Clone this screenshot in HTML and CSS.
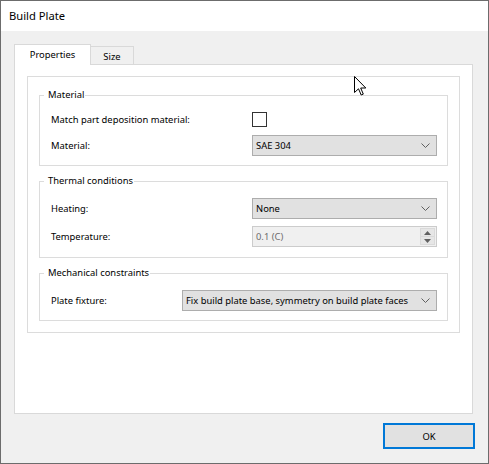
FILE: index.html
```html
<!DOCTYPE html>
<html>
<head>
<meta charset="utf-8">
<title>Build Plate</title>
<link rel="stylesheet" href="styles.css">
</head>
<body>
<div class="window">
  <div class="titlebar">Build Plate</div>
  <div class="client">
    <div class="tabs">
      <div class="tab active">Properties</div>
      <div class="tab">Size</div>
    </div>
    <div class="panel">
      <div class="inner">
        <fieldset class="group">
          <legend>Material</legend>
          <div class="row row-check">
            <span class="label">Match part deposition material:</span>
            <span class="checkbox"></span>
          </div>
          <div class="row row-gap8">
            <span class="label">Material:</span>
            <div class="combo"><span class="combo-text">SAE 304</span><svg class="chev" width="9" height="5" viewBox="0 0 9 5"><path d="M0.5 0.5 L4.5 4.5 L8.5 0.5" fill="none" stroke="#606060" stroke-width="1"/></svg></div>
          </div>
        </fieldset>
        <fieldset class="group">
          <legend>Thermal conditions</legend>
          <div class="row">
            <span class="label">Heating:</span>
            <div class="combo"><span class="combo-text">None</span><svg class="chev" width="9" height="5" viewBox="0 0 9 5"><path d="M0.5 0.5 L4.5 4.5 L8.5 0.5" fill="none" stroke="#606060" stroke-width="1"/></svg></div>
          </div>
          <div class="row row-gap7">
            <span class="label">Temperature:</span>
            <div class="spinfield">
              <span class="spin-text">0.1 (C)</span>
              <div class="spin">
                <div class="spin-btn"><svg width="7" height="4" viewBox="0 0 7 4"><path d="M0 4 L3.5 0 L7 4 Z" fill="#606060"/></svg></div>
                <div class="spin-btn"><svg width="7" height="4" viewBox="0 0 7 4"><path d="M0 0 L3.5 4 L7 0 Z" fill="#606060"/></svg></div>
              </div>
            </div>
          </div>
        </fieldset>
        <fieldset class="group">
          <legend>Mechanical constraints</legend>
          <div class="row">
            <span class="label label-short">Plate fixture:</span>
            <div class="combo"><span class="combo-text">Fix build plate base, symmetry on build plate faces</span><svg class="chev" width="9" height="5" viewBox="0 0 9 5"><path d="M0.5 0.5 L4.5 4.5 L8.5 0.5" fill="none" stroke="#606060" stroke-width="1"/></svg></div>
          </div>
        </fieldset>
      </div>
    </div>
    <div class="buttons">
      <button class="ok">OK</button>
    </div>
  </div>
  <svg class="cursor" width="13" height="20" viewBox="0 0 13 20"><path d="M0.5 0.5 L0.5 16.5 L4.5 12.8 L7.2 19 L9.3 18.1 L6.7 12 L11.8 12 Z" fill="#ffffff" stroke="#000000" stroke-width="1" stroke-linejoin="miter"/></svg>
</div>
</body>
</html>
```

FILE: styles.css
```css
* {
  box-sizing: border-box;
}

html, body {
  margin: 0;
  padding: 0;
  background: #2b2b2b;
}

body {
  font-family: "Noto Sans", "Open Sans", sans-serif;
  font-size: 9.4px;
  color: #000000;
}

.window {
  position: relative;
  width: 489px;
  height: 464px;
  border: 1px solid #6c6c6c;
  background: #f0f0f0;
  display: flex;
  flex-direction: column;
  overflow: hidden;
}

.titlebar {
  height: 30px;
  line-height: 30px;
  background: #ffffff;
  padding-left: 8px;
  font-size: 11.2px;
  color: #000000;
}

.client {
  flex: 1;
  padding: 13px 13px 0 13px;
  display: flex;
  flex-direction: column;
}

.tabs {
  height: 20px;
  display: flex;
  align-items: flex-end;
}

.tab {
  height: 18px;
  width: 44px;
  border: 1px solid #d9d9d9;
  border-bottom: none;
  background: #f0f0f0;
  display: flex;
  align-items: center;
  justify-content: center;
  padding-top: 1px;
}

.tab.active {
  width: 77px;
  height: 21px;
  margin-bottom: -1px;
  background: #ffffff;
  position: relative;
  z-index: 1;
  margin-right: -1px;
  padding-top: 0;
  padding-bottom: 2px;
}

.panel {
  height: 350px;
  margin-right: 2px;
  background: #ffffff;
  border: 1px solid #d9d9d9;
  padding: 11px 12px 0 12px;
}

.inner {
  border: 1px solid #dcdcdc;
  padding: 10px 11px 11px 11px;
}

.group {
  margin: 0;
  min-width: 0;
  border: 1px solid #dcdcdc;
  padding: 9px 10px 9px 11px;
}

.group + .group {
  margin-top: 7px;
}

.group:nth-child(2) {
  padding-bottom: 10px;
}

.group legend {
  line-height: 16px;
  height: 16px;
  padding: 0 1px 0 4px;
  margin-left: -7px;
}

.row {
  display: flex;
  align-items: center;
  height: 21px;
}

.row-check {
  height: 15px;
}

.row-gap8 {
  margin-top: 8px;
}

.row-gap7 {
  margin-top: 7px;
}

.label {
  width: 201px;
  flex: none;
}

.label-short {
  width: 131px;
}

.checkbox {
  width: 15px;
  height: 15px;
  border: 1px solid #333333;
  background: #ffffff;
}

.combo {
  flex: 1;
  height: 21px;
  background: #e1e1e1;
  border: 1px solid #adadad;
  display: flex;
  align-items: center;
  padding: 0 6px 0 3px;
}

.combo-text {
  flex: 1;
  white-space: nowrap;
}

.chev {
  display: block;
  flex: none;
}

.spinfield {
  flex: 1;
  height: 21px;
  background: #f0f0f0;
  border: 1px solid #cccccc;
  display: flex;
  align-items: stretch;
  padding: 1px 1px 1px 3px;
}

.spin-text {
  flex: 1;
  color: #6d6d6d;
  display: flex;
  align-items: center;
}

.spin {
  width: 15px;
  display: flex;
  flex-direction: column;
}

.spin-btn {
  flex: 1;
  background: #e6e6e6;
  border: 1px solid #dadada;
  display: flex;
  align-items: center;
  justify-content: center;
}

.spin-btn + .spin-btn {
  border-top: none;
}

.spin-btn svg {
  display: block;
}

.buttons {
  margin-top: 9px;
  display: flex;
  justify-content: flex-end;
}

.ok {
  width: 92px;
  height: 26px;
  margin: 0;
  background: #e1e1e1;
  border: 2px solid #0078d7;
  font-family: inherit;
  font-size: 9.4px;
  color: #000000;
  padding: 0;
}

.cursor {
  position: absolute;
  left: 353px;
  top: 75px;
  display: block;
}
```
